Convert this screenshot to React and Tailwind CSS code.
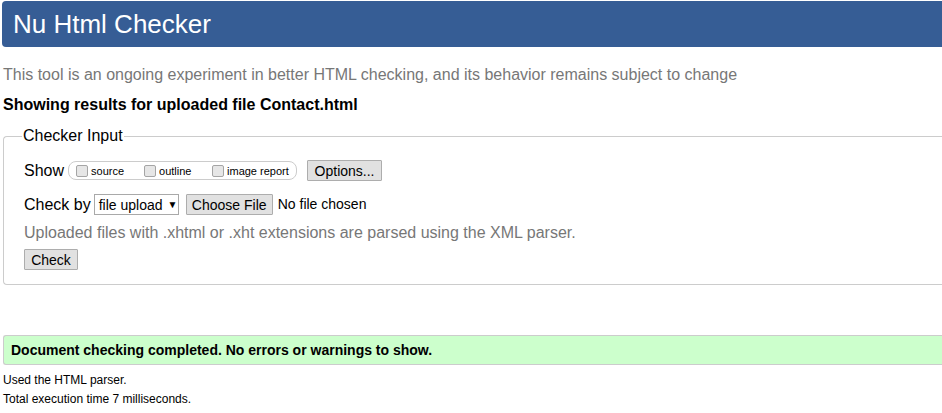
export default function App() {
  const btn =
    "inline-flex items-center justify-center h-[21px] border border-[#adadad] bg-[#e1e1e1] text-[14px] text-black leading-none rounded-[1px]";
  const cb = "inline-block w-[12px] h-[12px] border border-[#a5a5a5] bg-[#e6e6e6] rounded-[2px] mr-[3px] mt-[-2px]";
  return (
    <div className="w-[942px] h-[413px] overflow-hidden bg-white font-['Liberation_Sans',Arial,sans-serif] text-black">
      <div className="ml-[2px] mt-[1px] h-[46px] bg-[#365d95] rounded-l-[4px] flex items-center pl-[11px]">
        <h1 className="text-[26px] text-white leading-none">Nu Html Checker</h1>
      </div>
      <p className="ml-[3px] mt-[19px] text-[16px] leading-[18px] text-[#777]">
        This tool is an ongoing experiment in better HTML checking, and its behavior remains subject to change
      </p>
      <p className="ml-[3px] mt-[12px] text-[16px] leading-[18px] font-bold">
        Showing results for uploaded file Contact.html
      </p>
      <fieldset className="ml-[3px] mt-[13px] border border-r-0 border-[#ccc] rounded-l-[4px] pl-[20px] pb-[14px]">
        <legend className="text-[16px] leading-[18px] px-[1px] -ml-[2px]">Checker Input</legend>
        <div className="flex items-center h-[21px] mt-[15px]">
          <span className="text-[16px] mr-[4px]">Show</span>
          <div className="flex items-center h-[19px] w-[229px] border border-[#ccc] rounded-[8px] pl-[7px] text-[11px] pt-[2px]">
            <span className={cb}></span>
            <span className="w-[53px]">source</span>
            <span className={cb}></span>
            <span className="w-[53px]">outline</span>
            <span className={cb}></span>
            <span>image report</span>
          </div>
          <span className={btn + " w-[75px] ml-[10px]"}>Options...</span>
        </div>
        <div className="flex items-center h-[21px] mt-[13px]">
          <span className="text-[16px] mr-[3px]">Check by</span>
          <span className="inline-flex items-center h-[21px] w-[85px] border border-[#a9a9a9] bg-white text-[14px] pl-[4px] leading-none">
            file upload<span className="text-[10px] ml-[5px]">▼</span>
          </span>
          <span className={btn + " w-[87px] ml-[7px]"}>Choose File</span>
          <span className="text-[14px] ml-[5px]">No file chosen</span>
        </div>
        <p className="text-[16px] leading-[18px] text-[#777] mt-[9px]">
          Uploaded files with .xhtml or .xht extensions are parsed using the XML parser.
        </p>
        <div className="flex mt-[7px]">
          <span className={btn + " w-[54px]"}>Check</span>
        </div>
      </fieldset>
      <div className="ml-[3px] mt-[50px] h-[30px] bg-[#ccffcc] border border-r-0 border-[#ccc] rounded-l-[3px] flex items-center pl-[7px]">
        <span className="text-[14px] font-bold">Document checking completed. No errors or warnings to show.</span>
      </div>
      <p className="ml-[3px] mt-[8px] text-[12px] leading-[14px]">Used the HTML parser.</p>
      <p className="ml-[3px] mt-[5px] text-[12px] leading-[14px]">Total execution time 7 milliseconds.</p>
    </div>
  );
}
